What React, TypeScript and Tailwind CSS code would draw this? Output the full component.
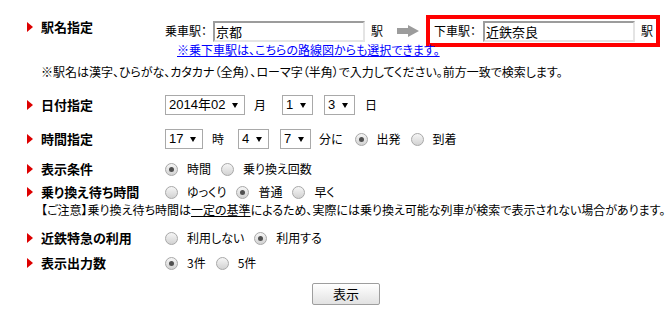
import type { ReactNode } from "react";

function Label({ children }: { children: ReactNode }) {
  return (
    <div className="flex w-[138px] shrink-0 items-center">
      <span className="h-0 w-0 border-y-[5px] border-l-[6px] border-y-transparent border-l-[#dd0000]" />
      <span className="ml-[8px] text-[13px] font-bold leading-[16px]">{children}</span>
    </div>
  );
}

function Select({ value, className }: { value: string; className: string }) {
  return (
    <span
      className={`flex h-[20px] items-center justify-between border border-[#a9a9a9] bg-white pl-[3px] pr-[6px] font-['Liberation_Sans','Noto_Sans_CJK_JP',sans-serif] text-[13px] ${className}`}
    >
      <span>{value}</span>
      <span className="h-0 w-0 border-x-[3px] border-t-[5px] border-x-transparent border-t-black" />
    </span>
  );
}

function Radio({ checked }: { checked?: boolean }) {
  return (
    <span className="flex h-[13px] w-[13px] shrink-0 items-center justify-center rounded-full border border-[#a8a8a8] bg-linear-to-b from-[#f6f6f6] to-[#d2d2d2]">
      {checked && <span className="h-[5px] w-[5px] rounded-full bg-[#505050]" />}
    </span>
  );
}

function Option({ checked, label, first }: { checked?: boolean; label: string; first?: boolean }) {
  return (
    <span className={`flex items-center ${first ? "" : "ml-[10px]"}`}>
      <Radio checked={checked} />
      <span className="ml-[9px]">{label}</span>
    </span>
  );
}

function StationInput({ value }: { value: string }) {
  return (
    <input
      readOnly
      defaultValue={value}
      className="h-[21px] w-[152px] border-2 border-t-[#9c9c9c] border-r-[#e4e4e4] border-b-[#e4e4e4] border-l-[#9c9c9c] bg-white pl-[1px] text-[13px] outline-none"
    />
  );
}

export default function App() {
  return (
    <div className="h-[315px] w-[669px] overflow-hidden bg-white pl-[27px] pt-[15px] font-['Noto_Sans_CJK_JP',sans-serif] text-[12px] text-black [font-feature-settings:'palt']">
      {/* 駅名 */}
      <div className="flex">
        <div className="mt-[4px] self-start">
          <Label>駅名指定</Label>
        </div>
        <div className="flex flex-col">
          <div className="flex h-[32px] items-center">
            <span className="w-[48px]">乗車駅：</span>
            <StationInput value="京都" />
            <span className="ml-[6px]">駅</span>
            <svg className="ml-[14px]" width="22" height="12" viewBox="0 0 22 12">
              <path d="M0 3h11V0l11 6-11 6V9H0z" fill="#9c9c9c" />
            </svg>
            <div className="ml-[7px] flex h-[32px] items-center border-[4px] border-[#ff0000] pl-[4px] pr-[3px]">
              <span className="w-[49px]">下車駅：</span>
              <StationInput value="近鉄奈良" />
              <span className="ml-[6px]">駅</span>
            </div>
          </div>
          <a href="#" className="-mt-[4px] ml-[12px] leading-[14px] text-[#0000ff] underline">
            ※乗下車駅は、こちらの路線図からも選択できます。
          </a>
        </div>
      </div>
      <div className="ml-[14px] mt-[8px] whitespace-nowrap leading-[14px]">
        ※駅名は漢字、ひらがな、カタカナ（全角）、ローマ字（半角）で入力してください。前方一致で検索します。
      </div>

      {/* 日付 */}
      <div className="mt-[16px] flex h-[20px] items-center">
        <Label>日付指定</Label>
        <Select value="2014年02" className="w-[80px]" />
        <span className="ml-[9px]">月</span>
        <Select value="1" className="ml-[16px] w-[31px]" />
        <Select value="3" className="ml-[11px] w-[31px]" />
        <span className="ml-[10px]">日</span>
      </div>

      {/* 時間 */}
      <div className="mt-[14px] flex h-[20px] items-center">
        <Label>時間指定</Label>
        <Select value="17" className="w-[38px]" />
        <span className="ml-[9px]">時</span>
        <Select value="4" className="ml-[14px] w-[31px]" />
        <Select value="7" className="ml-[11px] w-[31px]" />
        <span className="ml-[8px]">分に</span>
        <span className="ml-[2px] flex items-center">
          <Option checked label="出発" />
          <Option label="到着" />
        </span>
      </div>

      <div className="mt-[10px] flex h-[20px] items-center">
        <Label>表示条件</Label>
        <Option first checked label="時間" />
        <Option label="乗り換え回数" />
      </div>

      <div className="mt-[3px] flex h-[20px] items-center">
        <Label>乗り換え待ち時間</Label>
        <Option first label="ゆっくり" />
        <Option checked label="普通" />
        <Option label="早く" />
      </div>
      <div className="ml-[14px] mt-[1px] whitespace-nowrap leading-[14px]">
        【ご注意】乗り換え待ち時間は<span className="underline">一定の基準</span>によるため、実際には乗り換え可能な列車が検索で表示されない場合があります。
      </div>

      <div className="mt-[11px] flex h-[20px] items-center">
        <Label>近鉄特急の利用</Label>
        <Option first label="利用しない" />
        <Option checked label="利用する" />
      </div>

      <div className="mt-[5px] flex h-[20px] items-center">
        <Label>表示出力数</Label>
        <Option first checked label="3件" />
        <Option label="5件" />
      </div>

      <div className="mt-[10px] flex justify-center pr-[4px]">
        <button className="h-[22px] w-[68px] rounded-[2px] border border-[#9e9e9e] bg-linear-to-b from-white to-[#e2e2e2] text-[13px]">
          表示
        </button>
      </div>
    </div>
  );
}
